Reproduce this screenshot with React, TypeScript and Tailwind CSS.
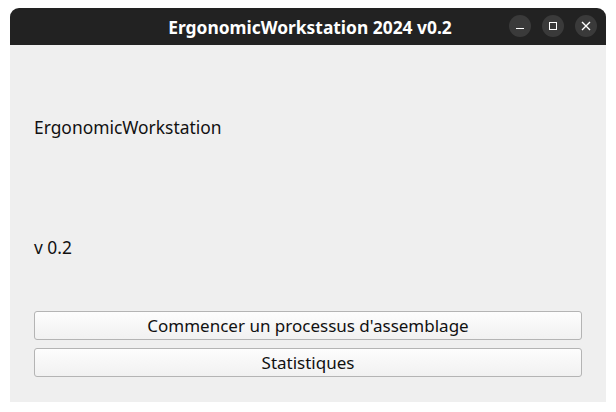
import React from "react";

export default function App() {
  const font = { fontFamily: '"Noto Sans", "Open Sans", sans-serif' };
  return (
    <div className="w-[616px] h-[412px] bg-white pt-[8px] pl-[10px]" style={font}>
      <div className="w-[596px] h-[394px] flex flex-col bg-[#efefef] rounded-t-[9px] overflow-hidden">
        <div className="h-[37px] bg-[#222222] flex items-center relative">
          <div className="flex-1 text-center text-white font-bold text-[17.4px] leading-[20px] pl-[4px]">
            ErgonomicWorkstation 2024 v0.2
          </div>
          <div className="absolute right-[9px] top-[7px] flex gap-[11px]">
            <div className="w-[22px] h-[22px] rounded-full bg-[#3a3a3a] flex items-center justify-center">
              <div className="w-[8px] h-[1.5px] bg-white mt-[5px]" />
            </div>
            <div className="w-[22px] h-[22px] rounded-full bg-[#3a3a3a] flex items-center justify-center">
              <div className="w-[8px] h-[8px] border border-white" />
            </div>
            <div className="w-[22px] h-[22px] rounded-full bg-[#3a3a3a] flex items-center justify-center">
              <svg width="10" height="10" viewBox="0 0 10 10">
                <path d="M1 1 L9 9 M9 1 L1 9" stroke="white" strokeWidth="1.4" />
              </svg>
            </div>
          </div>
        </div>
        <div className="flex-1 flex flex-col px-[24px] pt-[72px] text-[#111] text-[17.4px]">
          <div className="leading-[20px]">ErgonomicWorkstation</div>
          <div className="leading-[20px] mt-[100px]">v 0.2</div>
          <div className="mt-[54px] flex flex-col gap-[8px]">
            <button className="h-[29px] w-full rounded-[3px] border border-[#b4b4b4] bg-gradient-to-b from-[#fdfdfd] to-[#f1f1f1] text-[17px] text-[#111] leading-[20px]">
              Commencer un processus d'assemblage
            </button>
            <button className="h-[29px] w-full rounded-[3px] border border-[#b4b4b4] bg-gradient-to-b from-[#fdfdfd] to-[#f1f1f1] text-[17px] text-[#111] leading-[20px]">
              Statistiques
            </button>
          </div>
        </div>
      </div>
    </div>
  );
}
